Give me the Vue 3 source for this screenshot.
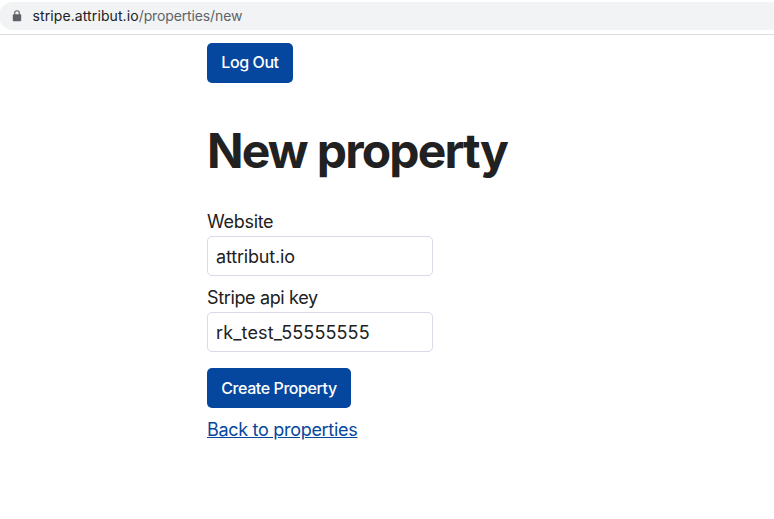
<script setup>
import { ref } from 'vue'
const website = ref('attribut.io')
const apiKey = ref('rk_test_55555555')
</script>

<template>
  <div class="page">
    <header class="bar">
      <div class="address">
        <svg class="lock" width="10" height="12" viewBox="0 0 10 12">
          <path d="M2.7 5V3a2.3 2.3 0 0 1 4.6 0V5" fill="none" stroke="#5f6368" stroke-width="1.1" />
          <rect x="0.8" y="4.2" width="8.4" height="7" rx="0.9" fill="#5f6368" />
        </svg>
        <span class="url"><span class="host">stripe.attribut.io</span><span class="path">/properties/new</span></span>
      </div>
    </header>
    <main class="content">
      <button class="btn logout">Log Out</button>
      <h1>New property</h1>
      <form @submit.prevent>
        <label for="website">Website</label>
        <input id="website" v-model="website" type="text" />
        <label for="key" class="key-label">Stripe api key</label>
        <input id="key" v-model="apiKey" type="text" />
        <button class="btn create">Create Property</button>
      </form>
      <a href="#">Back to properties</a>
    </main>
  </div>
</template>

<style>
body { background: #fff; overflow: hidden; }
</style>
<style scoped>
* { box-sizing: border-box; }
.page { height: 519px; font-family: Inter, sans-serif; color: #212121; }
.bar { height: 35px; padding-top: 2px; border-bottom: 1px solid #dadce0; }
.address { height: 28px; margin-right: -20px; margin-left: -1px; padding-left: 13px; border-radius: 14px; background: #f1f3f4; display: flex; align-items: center; }
.url { margin-left: 10.5px; font: 14px/20px Inter, sans-serif; color: #202124; white-space: nowrap; }
.host { letter-spacing: 0.1px; }
.path { color: #5f6368; letter-spacing: -0.13px; }
.content { padding: 8px 0 0 207px; display: flex; flex-direction: column; align-items: flex-start; }
.btn { height: 40px; padding: 0 0 2px; border: 0; border-radius: 5px; background: #05479e; color: #fff; font: 500 16px/24px Inter, sans-serif; letter-spacing: -0.42px; }
.logout { width: 86px; }
.create { width: 144px; padding-bottom: 0; margin-top: 8px; }
h1 { margin: 39px 0 29px; font: 700 48px/58px Inter, sans-serif; letter-spacing: -1.85px; word-spacing: 0.5px; white-space: nowrap; }
form { display: flex; flex-direction: column; align-items: flex-start; }
label { font-size: 18px; line-height: 25px; height: 27px; letter-spacing: -0.3px; }
.key-label { letter-spacing: -0.36px; }
input { width: 226px; height: 40px; margin-bottom: 9px; padding: 0 8px; border: 1px solid #d8dae5; border-radius: 5px; font: 18px/24px Inter, sans-serif; color: #212121; outline: 0; background: #fff; letter-spacing: -0.18px; }
input#key { margin-bottom: 8px; letter-spacing: 0.13px; }
a { margin-top: 9px; font-size: 18px; line-height: 25px; color: #05479e; letter-spacing: -0.3px; }
</style>
